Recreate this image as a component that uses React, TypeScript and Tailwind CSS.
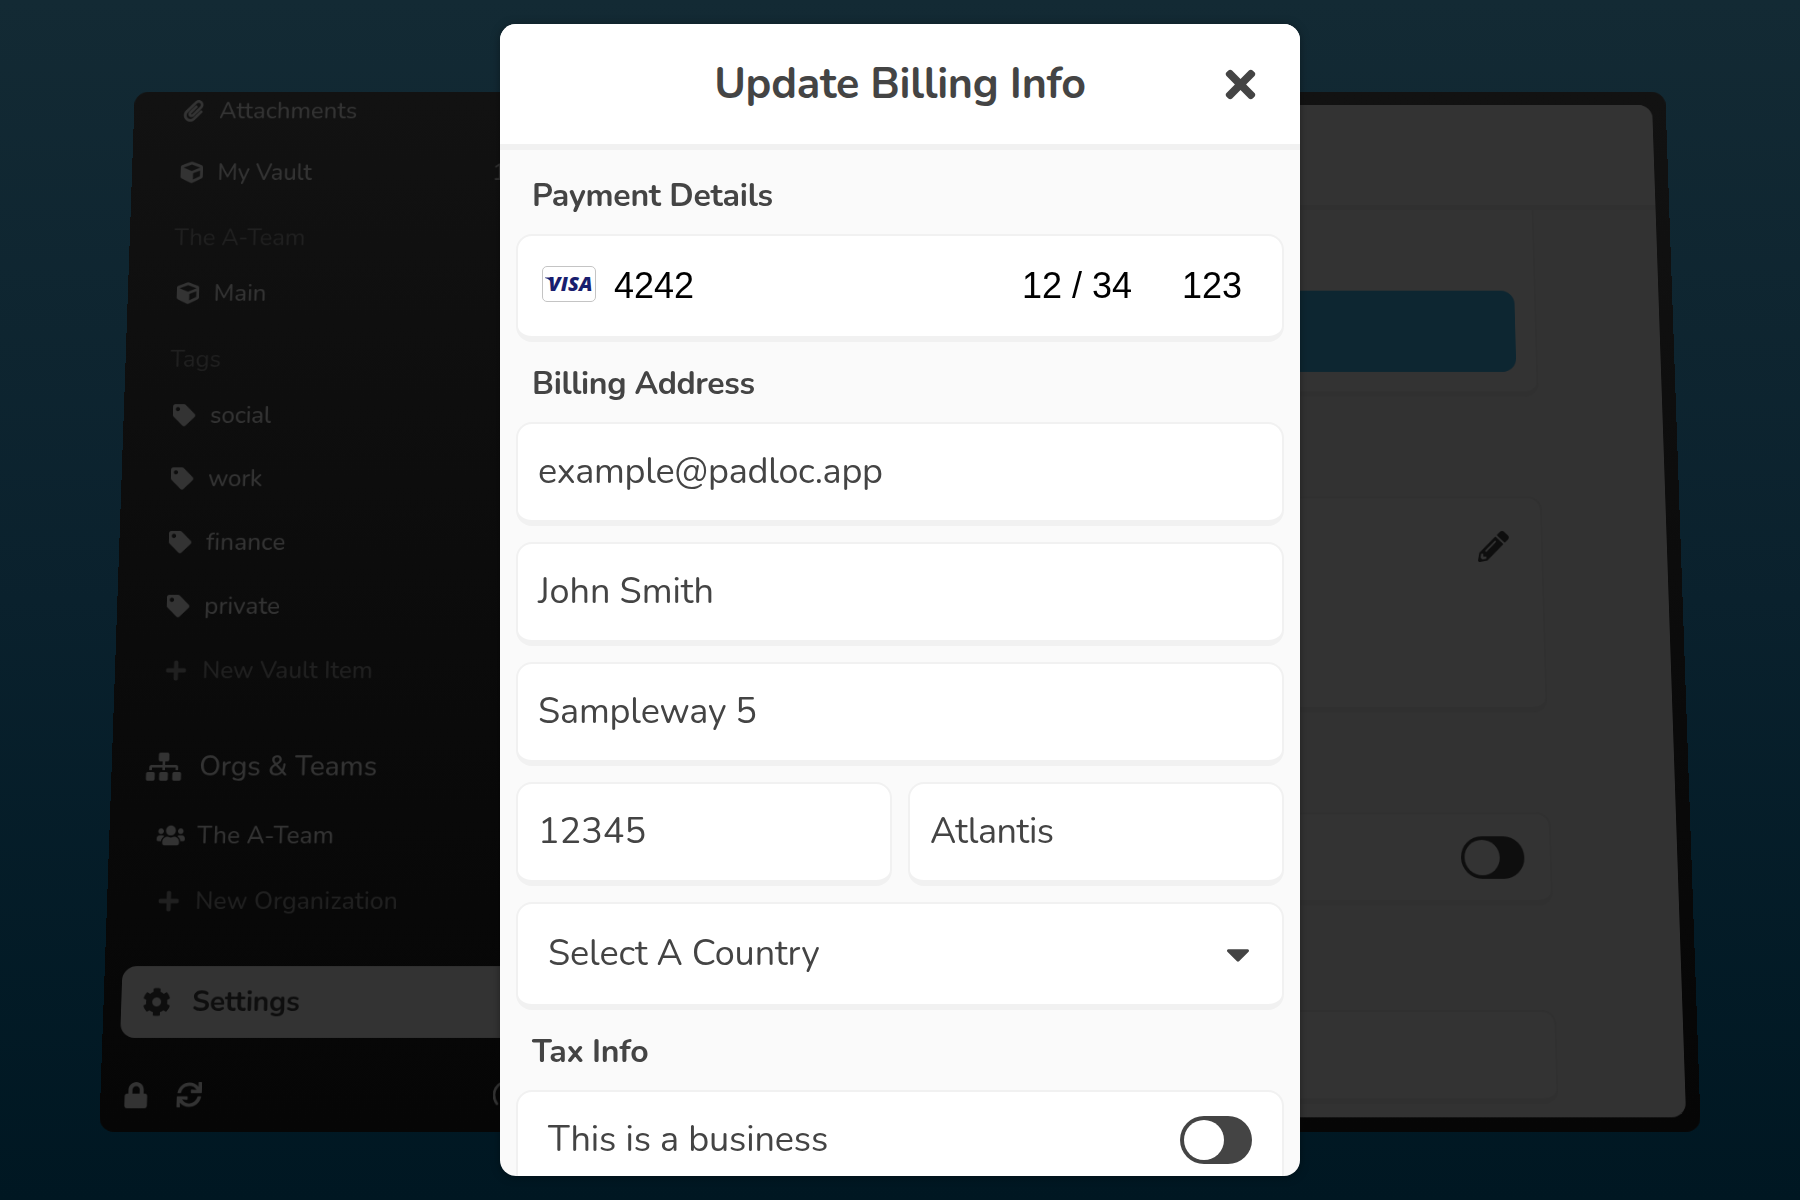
import React from "react";
import {
  FaCaretDown,
  FaCog,
  FaCube,
  FaLock,
  FaPaperclip,
  FaPencilAlt,
  FaPlus,
  FaSitemap,
  FaSync,
  FaTag,
  FaTimes,
  FaUsers,
} from "react-icons/fa";

type IconType = React.ComponentType<{ className?: string }>;

function NavRow({
  icon: Icon,
  label,
  spacing = "",
  muted,
  count,
}: {
  icon: IconType;
  label: string;
  spacing?: string;
  muted?: boolean;
  count?: string;
}) {
  return (
    <div className={`flex h-[74px] shrink-0 items-center pl-[54px] text-[28px] leading-none font-medium ${muted ? "text-[#202020]" : "text-[#333333]"}`}>
      <Icon className="h-[26px] w-8 shrink-0" />
      <span className={`ml-[14px] whitespace-nowrap ${spacing}`}>{label}</span>
      {count && <span className="ml-auto w-[98px]">{count}</span>}
    </div>
  );
}

function NavSection({ label }: { label: string }) {
  return (
    <div className="flex h-[70px] shrink-0 items-center pt-3 pl-[52px] text-[28px] leading-none tracking-[-0.15px] text-[#202020]">
      {label}
    </div>
  );
}

function Sidebar() {
  return (
    <aside className="flex w-[520px] shrink-0 flex-col overflow-hidden">
      <nav className="-mt-[14px] flex flex-col">
        <NavRow icon={FaPaperclip} label="Attachments" />
        <NavRow icon={FaCube} label="My Vault" spacing="tracking-[-0.25px]" count="13" />
        <NavSection label="The A-Team" />
        <NavRow icon={FaCube} label="Main" />
        <NavSection label="Tags" />
        <NavRow icon={FaTag} label="social" spacing="tracking-[-0.25px]" />
        <NavRow icon={FaTag} label="work" spacing="tracking-[-0.3px]" />
        <NavRow icon={FaTag} label="finance" spacing="tracking-[0.1px]" />
        <NavRow icon={FaTag} label="private" />
        <NavRow icon={FaPlus} label="New Vault Item" spacing="tracking-[-0.08px]" muted />
        <div className="mt-8 flex h-[82px] items-center pl-[39px] text-[32px] leading-none font-medium text-[#333333]">
          <FaSitemap className="h-8 w-[41px]" />
          <span className="ml-5 tracking-[-0.05px]">Orgs &amp; Teams</span>
        </div>
        <NavRow icon={FaUsers} label="The A-Team" />
        <NavRow icon={FaPlus} label="New Organization" spacing="tracking-[0.1px]" muted />
      </nav>
      <div className="mx-5 mt-[36px] flex h-20 items-center rounded-2xl bg-[#333333] pl-6 text-[32px] leading-none font-bold text-[#0e0e0e]">
        <FaCog className="h-8 w-8" />
        <span className="ml-6 tracking-[-0.23px]">Settings</span>
      </div>
      <div className="flex flex-1 items-center pt-[22px] pl-[26px] text-[#333333]">
        <FaLock className="h-[29px] w-7" />
        <FaSync className="ml-8 h-[28px] w-7" />
        <svg className="ml-[328px] h-8 w-8" viewBox="0 0 32 32" fill="none" stroke="currentColor" strokeWidth="3" strokeLinecap="round">
          <path d="M4.5 26A15 15 0 1 1 27.5 26" />
        </svg>
      </div>
    </aside>
  );
}

const panelCard = "ml-[160px] w-[961px] shrink-0 border-2 border-b-[6px] border-[#303030] bg-[#333333]";

function SettingsPanel() {
  return (
    <main className="my-4 mr-4 flex flex-1 flex-col overflow-hidden rounded-2xl bg-[#323232]">
      <div className="h-[126px] shrink-0 border-b-[6px] border-[#303030] bg-[#333333]" />
      <div className="flex flex-1 flex-col overflow-hidden">
        <div className={`h-[221px] rounded-b-2xl border-t-0 pt-24 pr-[23px] pl-[22px] ${panelCard}`}>
          <div className="h-24 rounded-2xl bg-[#0d2631]" />
        </div>
        <div className={`mt-[117px] flex h-[249px] justify-end rounded-2xl pt-[38px] pr-[37px] text-[#0e0e0e] ${panelCard}`}>
          <FaPencilAlt className="h-9 w-9" />
        </div>
        <div className={`mt-[114px] flex h-[105px] items-center justify-end rounded-2xl pr-[29px] ${panelCard}`}>
          <div className="h-12 w-[72px] rounded-full bg-[#0e0e0e] p-1">
            <div className="size-10 rounded-full bg-[#333333]" />
          </div>
        </div>
        <div className={`mt-[117px] h-[104px] rounded-2xl ${panelCard}`} />
      </div>
    </main>
  );
}

const cardClass = "rounded-2xl border-2 border-b-[6px] border-[#f1f1f1] bg-white";

function Label({ children, spacing }: { children: string; spacing: string }) {
  return (
    <h2 className={`flex h-20 shrink-0 items-center pt-[3px] pl-4 text-[32px] leading-none font-bold ${spacing}`}>
      {children}
    </h2>
  );
}

function Field({ value, spacing, className = "" }: { value: string; spacing: string; className?: string }) {
  return (
    <div className={`flex h-[104px] shrink-0 items-center pl-5 text-[36px] leading-none ${cardClass} ${className}`}>
      <span className={spacing}>{value}</span>
    </div>
  );
}

function VisaBadge() {
  return (
    <div className="relative mb-1 flex h-9 w-[54px] items-center justify-center rounded-[5px] border border-[#c4c4c4] bg-white">
      <span className="ml-[3px] font-['Open_Sans'] text-[20px] leading-none font-extrabold tracking-[0.1px] text-[#191e6e] italic">
        VISA
      </span>
      <svg className="absolute top-[10px] left-[2px] h-2 w-2" viewBox="0 0 8 8" fill="#191e6e">
        <path d="M0 .6h4.600C5.800.7 6.400 1.200 6.700 2.200L7.600 7C6.200 4 3.500 1.800 0 1z" />
      </svg>
    </div>
  );
}

function BillingDialog() {
  return (
    <section className="flex h-[1152px] w-[800px] flex-col overflow-hidden rounded-2xl bg-[#fafafa] text-[#444444] shadow-[0_1px_10px_rgba(0,0,0,0.35)]">
      <header className="flex h-[126px] shrink-0 items-center border-b-[6px] border-[#f1f1f1] bg-white">
        <div className="w-[120px]" />
        <h1 className="flex-1 text-center text-[43px] leading-none font-bold tracking-[-0.28px]">Update Billing Info</h1>
        <div className="flex w-[120px] justify-center">
          <FaTimes className="size-[43px]" />
        </div>
      </header>
      <div className="flex flex-1 flex-col overflow-hidden px-4 pt-1">
        <Label spacing="tracking-[-0.26px]">Payment Details</Label>
        <div className={`flex h-[108px] shrink-0 items-center pl-6 font-['Liberation_Sans'] text-[36px] leading-none text-black ${cardClass}`}>
          <VisaBadge />
          <span className="ml-[18px] w-[408px]">4242</span>
          <span className="w-[160px] whitespace-nowrap">12 / 34</span>
          <span>123</span>
        </div>
        <Label spacing="tracking-[-0.38px]">Billing Address</Label>
        <div className="flex shrink-0 flex-col gap-4">
          <Field value="example@padloc.app" spacing="tracking-[-0.29px]" />
          <Field value="John Smith" spacing="tracking-[-0.06px]" />
          <Field value="Sampleway 5" spacing="tracking-[-0.17px]" />
          <div className="flex gap-4">
            <Field value="12345" spacing="tracking-normal" className="flex-1" />
            <Field value="Atlantis" spacing="tracking-[-0.45px]" className="flex-1" />
          </div>
          <div className={`flex h-[108px] items-center justify-between pr-[25px] pl-[30px] text-[36px] leading-none ${cardClass}`}>
            <span className="tracking-[-0.13px]">Select A Country</span>
            <FaCaretDown className="size-[38px]" />
          </div>
        </div>
        <Label spacing="tracking-[-0.25px]">Tax Info</Label>
        <div className={`flex h-[104px] shrink-0 items-center justify-between px-[30px] text-[36px] leading-none ${cardClass}`}>
          <span className="tracking-[-0.12px]">This is a business</span>
          <div className="h-12 w-[72px] rounded-full bg-[#444444] p-1">
            <div className="size-10 rounded-full bg-white" />
          </div>
        </div>
      </div>
    </section>
  );
}

export default function App() {
  return (
    <div className="relative h-[1200px] w-[1800px] overflow-hidden bg-linear-to-b from-[#132a34] via-[#0a212d] to-[#001722] font-['Nunito','Lato',sans-serif]">
      <div className="flex h-[1200px] w-[1800px] overflow-hidden rounded-2xl bg-linear-to-b from-[#121212] to-[#060606] transform-[perspective(2000px)_translateZ(-300px)_rotateX(5deg)]">
        <Sidebar />
        <SettingsPanel />
      </div>
      <div className="absolute inset-0 flex items-center justify-center">
        <BillingDialog />
      </div>
    </div>
  );
}
